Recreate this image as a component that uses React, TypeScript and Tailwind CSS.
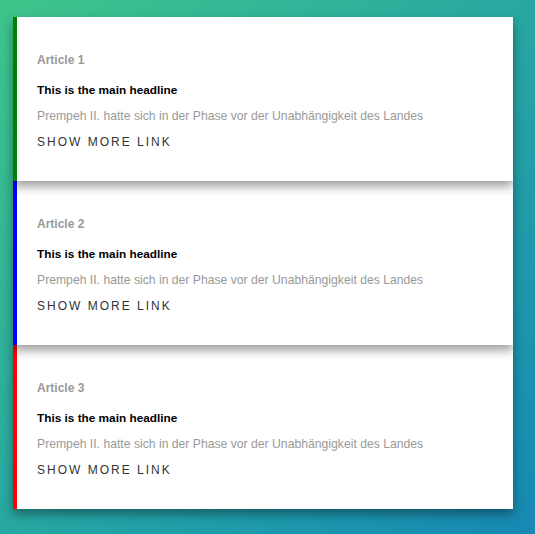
const articles = [
  { id: 1, border: "border-l-[#008000]", z: "z-30" },
  { id: 2, border: "border-l-[#0000ff]", z: "z-20" },
  { id: 3, border: "border-l-[#ff0000]", z: "z-10" }
];

export default function App() {
  return (
    <div
      className="min-h-[534px] bg-gradient-to-br from-[#3fc589] to-[#1788b4] pl-[13px] pt-[17px] pb-[25px]"
      style={{ fontFamily: '"Liberation Sans", Arial, sans-serif' }}
    >
      <div className="flex w-[500px] flex-col">
        {articles.map((a) => (
          <section
            key={a.id}
            className={`relative ${a.z} h-[164px] border-l-4 ${a.border} bg-white pl-5 pt-[33px] shadow-[0_5px_10px_rgba(0,0,0,0.4)]`}
          >
            <p className="text-[12px] font-bold leading-5 text-[#999]">Article {a.id}</p>
            <h2 className="mt-[10px] text-[11.8px] font-bold leading-5 text-black">This is the main headline</h2>
            <p className="mt-[6px] text-[12.2px] leading-5 text-[#999]">
              Prempeh II. hatte sich in der Phase vor der Unabhängigkeit des Landes
            </p>
            <a className="mt-[6px] block text-[12px] uppercase leading-5 tracking-[2px] text-[#333]">Show more link</a>
          </section>
        ))}
      </div>
    </div>
  );
}
